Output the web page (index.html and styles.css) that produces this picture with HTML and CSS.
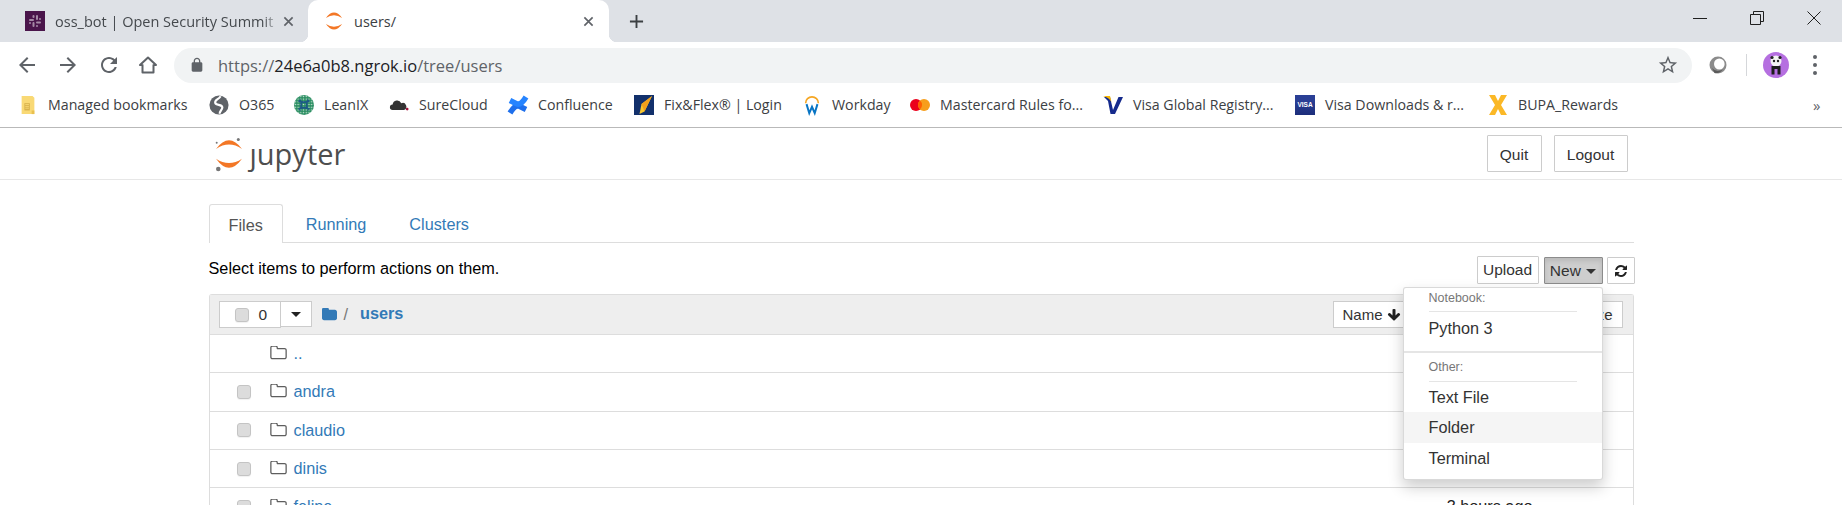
FILE: index.html
```html
<!DOCTYPE html>
<html lang="en">
<head>
<meta charset="utf-8">
<title>users/</title>
<link rel="stylesheet" href="styles.css">
</head>
<body>
<svg class="defs" width="0" height="0" aria-hidden="true">
  <symbol id="fa-folder-o" viewBox="0 0 1664 1408"><path transform="translate(0 -192)" d="M1536 1312v-704q0-40-28-68t-68-28h-704q-40 0-68-28t-28-68v-64q0-40-28-68t-68-28h-320q-40 0-68 28t-28 68v960q0 40 28 68t68 28h1216q40 0 68-28t28-68zm128-704v704q0 92-66 158t-158 66h-1216q-92 0-158-66t-66-158v-960q0-92 66-158t158-66h320q92 0 158 66t66 158v32h672q92 0 158 66t66 158z"/></symbol>
  <symbol id="jup-arcs" viewBox="0 0 28 32"><path d="M1 11Q14-6.400 27 11 14 2.200 1 11Z"/><path d="M1 20.700Q14 38.700 27 20.700 14 29.300 1 20.700Z"/></symbol>
  <pattern id="leanix-dots" width="3" height="3" patternUnits="userSpaceOnUse"><rect width="3" height="3" fill="#2c8f63"/><circle cx="1.500" cy="1.500" r=".8" fill="#cfe8da"/></pattern>
</svg>

<header class="chrome">
  <div class="tabstrip">
    <div class="tab">
      <svg class="favicon" viewBox="0 0 20 20"><rect width="20" height="20" fill="#4a154b"/><g fill="#a58aa6"><rect x="4" y="8" width="5" height="2" rx="1"/><rect x="11" y="4" width="2" height="5" rx="1"/><rect x="11" y="10.500" width="5" height="2" rx="1"/><rect x="7.500" y="11" width="2" height="5" rx="1"/><rect x="7.500" y="4" width="2" height="3" rx="1"/><rect x="14" y="7" width="2" height="2" rx="1"/><rect x="4" y="11" width="2" height="2" rx="1"/><rect x="11" y="14" width="2" height="2" rx="1"/></g></svg>
      <span class="tab-title tab-title-faded">oss_bot | Open Security Summit Slack</span>
      <svg class="tab-close" viewBox="0 0 12 12"><path d="M1.500 1.500l9 9M10.500 1.500l-9 9"/></svg>
    </div>
    <div class="tab tab-active">
      <svg class="favicon favicon-jup" viewBox="0 0 28 32"><use href="#jup-arcs"/></svg>
      <span class="tab-title">users/</span>
      <svg class="tab-close" viewBox="0 0 12 12"><path d="M1.500 1.500l9 9M10.500 1.500l-9 9"/></svg>
    </div>
    <svg class="tab-new" viewBox="0 0 16 16"><path d="M8 1v14M1 8h14"/></svg>
    <div class="window-controls">
      <svg viewBox="0 0 14 14"><path d="M0 7.500h14"/></svg>
      <svg viewBox="0 0 14 14"><path d="M.5 3.500h10v10H.5zM3.500 3.500V.5h10v10h-3"/></svg>
      <svg viewBox="0 0 14 14"><path d="M.5.5l13 13M13.500.5l-13 13"/></svg>
    </div>
  </div>

  <div class="toolbar">
    <svg class="nav-icon" viewBox="0 0 24 24"><path d="M20 11H7.830l5.590-5.590L12 4l-8 8 8 8 1.410-1.410L7.830 13H20v-2z"/></svg>
    <svg class="nav-icon" viewBox="0 0 24 24"><path d="M12 4l-1.410 1.410L16.170 11H4v2h12.170l-5.580 5.590L12 20l8-8z"/></svg>
    <svg class="nav-icon" viewBox="0 0 24 24"><path d="M17.650 6.350C16.200 4.900 14.210 4 12 4c-4.420 0-7.990 3.580-7.990 8s3.570 8 7.990 8c3.730 0 6.840-2.550 7.730-6h-2.080c-.82 2.330-3.040 4-5.650 4-3.310 0-6-2.690-6-6s2.690-6 6-6c1.660 0 3.140.69 4.220 1.780L13 11h7V4l-2.350 2.350z"/></svg>
    <svg class="nav-icon nav-home" viewBox="0 0 24 24"><path d="M12 4.500L4 12h2.500v7.500h11V12H20z"/></svg>
    <div class="omnibox">
      <svg class="lock" viewBox="0 0 24 24"><path d="M18 8h-1V6c0-2.760-2.240-5-5-5S7 3.240 7 6v2H6c-1.100 0-2 .9-2 2v10c0 1.100.9 2 2 2h12c1.100 0 2-.9 2-2V10c0-1.100-.9-2-2-2zM9 6c0-1.660 1.340-3 3-3s3 1.340 3 3v2H9V6z"/></svg>
      <span class="url"><span class="url-dim">https://</span>24e6a0b8.ngrok.io<span class="url-dim">/tree/users</span></span>
      <svg class="star" viewBox="0 0 24 24"><path d="M22 9.240l-7.190-.62L12 2 9.190 8.630 2 9.240l5.460 4.730L5.820 21 12 17.270 18.180 21l-1.630-7.030L22 9.240zM12 15.400l-3.760 2.270 1-4.280-3.320-2.880 4.380-.38L12 6.100l1.710 4.040 4.380.38-3.320 2.880 1 4.280L12 15.400z"/></svg>
    </div>
    <div class="toolbar-right">
      <svg class="ext" viewBox="0 0 20 20"><circle cx="10" cy="10" r="8.500" fill="#8b8b8b"/><ellipse cx="11.300" cy="9" rx="5.300" ry="5.500" fill="#fff"/><path d="M4 13q4 5 11 1.500-5 5-8.500 3.500z" fill="#5a5a5a"/></svg>
      <span class="toolbar-sep"></span>
      <svg class="avatar" viewBox="0 0 26 26"><circle cx="13" cy="13" r="13" fill="#b56fe0"/><circle cx="13" cy="9" r="5.500" fill="#f4f4f4"/><circle cx="9" cy="5.500" r="1.600" fill="#222"/><circle cx="17" cy="5.500" r="1.600" fill="#222"/><circle cx="11" cy="9" r="1.200" fill="#222"/><circle cx="15" cy="9" r="1.200" fill="#222"/><path d="M8.500 14h9v8.500h-3V17h-3v5.500h-3z" fill="#1d1d1d"/></svg>
      <svg class="menu-dots" viewBox="0 0 6 22"><circle cx="3" cy="3" r="2"/><circle cx="3" cy="11" r="2"/><circle cx="3" cy="19" r="2"/></svg>
    </div>
  </div>

  <nav class="bookmarks">
    <a class="bm"><svg class="bm-icon" viewBox="0 0 20 22"><path d="M3 1h12l2 2v18H3z" fill="#f9d975"/><path d="M6 9h6v8H6z" fill="#d8b24d"/><path d="M7 10.500h4M7 12.500h4M7 14.500h4" stroke="#f9d975"/><path d="M14 17h3v4h-3z" fill="#e9c04f"/></svg><span>Managed bookmarks</span></a>
    <a class="bm"><svg class="bm-icon" viewBox="0 0 24 24"><circle cx="12" cy="12" r="11.500" fill="#5f6368"/><path d="M14 1.500C11 6 6.500 5.500 7.500 9.500 8.500 13 16 10.500 16 15c0 3-3.500 4-3 7.500" fill="none" stroke="#fff" stroke-width="2.600"/></svg><span>O365</span></a>
    <a class="bm"><svg class="bm-icon" viewBox="0 0 22 22"><circle cx="11" cy="11" r="11" fill="url(#leanix-dots)"/><path d="M5 6.500q6 3 12 0M5 15.500q6-3 12 0M6.500 5q3 6 0 12M15.500 5q-3 6 0 12" fill="none" stroke="#1d5a86" stroke-width="2"/></svg><span>LeanIX</span></a>
    <a class="bm"><svg class="bm-icon" viewBox="0 0 22 22"><path d="M4 16.500a3 3 0 0 1 0-6 5 5 0 0 1 9.500-1.500A3.800 3.800 0 0 1 16.500 16.500z" fill="#333"/><circle cx="20" cy="15.500" r="1.500" fill="#a3123a"/></svg><span>SureCloud</span></a>
    <a class="bm"><svg class="bm-icon" viewBox="0 0 20 20"><path d="M2 18C5.500 12 8.500 10 11.500 11.200L18 14.500" fill="none" stroke="#1e6fec" stroke-width="5.500"/><path d="M18 2C14.500 8 11.500 10 8.500 8.800L2 5.500" fill="none" stroke="#2684ff" stroke-width="5.500"/></svg><span>Confluence</span></a>
    <a class="bm"><svg class="bm-icon" viewBox="0 0 20 20"><rect width="20" height="20" fill="#12306b"/><path d="M18 1L7.500 9 5.500 19l5-2.500z" fill="#f7c62f"/><path d="M18 1L7.500 9l3 7.500z" fill="#f19f1c"/></svg><span>Fix&amp;Flex® | Login</span></a>
    <a class="bm"><svg class="bm-icon" viewBox="0 0 20 22"><path d="M3 9a7 7 0 0 1 14 0" fill="none" stroke="#f5a623" stroke-width="1.800"/><path d="M4 10l3 10 3-7 3 7 3-10" fill="none" stroke="#0875c4" stroke-width="2.200"/></svg><span>Workday</span></a>
    <a class="bm"><svg class="bm-icon" viewBox="0 0 20 14"><circle cx="6" cy="7" r="6" fill="#eb001b"/><circle cx="14" cy="7" r="6" fill="#f79e1b"/><path d="M10 2.500a6 6 0 0 1 0 9 6 6 0 0 1 0-9z" fill="#ff5f00"/></svg><span>Mastercard Rules fo...</span></a>
    <a class="bm"><svg class="bm-icon" viewBox="0 0 20 20"><path d="M1 2h6l3 13L15.500 2H20l-8 17H7.500L5 6z" fill="#152a8c"/><path d="M0 1h7l1.500 6C7 4 4 2 0 1z" fill="#f7b600"/></svg><span>Visa Global Registry...</span></a>
    <a class="bm"><span class="visa-badge">VISA</span><span>Visa Downloads &amp; r...</span></a>
    <a class="bm"><svg class="bm-icon" viewBox="0 0 20 20"><path d="M1 0h6l3 6 3-6h6l-6 10 6 10h-6l-3-6-3 6H1l6-10z" fill="#fbb826"/></svg><span>BUPA_Rewards</span></a>
    <a class="bm-more">»</a>
  </nav>
</header>

<div class="site-header">
  <div class="site-header-inner">
    <a class="logo">
      <svg class="logo-mark" viewBox="0 0 28 34"><use href="#jup-arcs" width="28" height="32"/><circle cx="23.300" cy="1.500" r="1.500" fill="#767677"/><circle cx="1.700" cy="4.700" r="1" fill="#767677"/><circle cx="3.300" cy="31" r="2.300" fill="#767677"/></svg>
      <span class="logo-word">ȷupyter</span>
    </a>
    <div class="header-buttons">
      <button class="btn btn-header btn-quit">Quit</button>
      <button class="btn btn-header btn-logout">Logout</button>
    </div>
  </div>
</div>

<main class="container">
  <ul class="tabs">
    <li class="tabs-item tabs-item-active">Files</li>
    <li class="tabs-item">Running</li>
    <li class="tabs-item">Clusters</li>
  </ul>

  <div class="actions">
    <span class="hint">Select items to perform actions on them.</span>
    <div class="action-buttons">
      <button class="btn btn-upload">Upload</button>
      <div class="new-wrap">
        <button class="btn btn-new">New <span class="caret"></span></button>
        <div class="menu">
          <div class="menu-heading">Notebook:</div>
          <div class="menu-item menu-item-first">Python 3</div>
          <div class="menu-divider"></div>
          <div class="menu-heading menu-heading-second">Other:</div>
          <div class="menu-item menu-item-short">Text File</div>
          <div class="menu-item menu-item-hover">Folder</div>
          <div class="menu-item">Terminal</div>
        </div>
      </div>
      <button class="btn btn-refresh" aria-label="Refresh"><svg viewBox="0 0 1792 1792"><path d="M1639 1056q0 5-1 7-64 268-268 434.500t-478 166.500q-146 0-282.500-55t-243.500-157l-129 129q-19 19-45 19t-45-19-19-45v-448q0-26 19-45t45-19h448q26 0 45 19t19 45-19 45l-137 137q71 66 161 102t187 36q134 0 250-65t186-179q11-17 53-117 8-23 30-23h192q13 0 22.500 9.500t9.500 22.500zm25-800v448q0 26-19 45t-45 19h-448q-26 0-45-19t-19-45 19-45l138-138q-148-137-349-137-134 0-250 65t-186 179q-11 17-53 117-8 23-30 23h-199q-13 0-22.500-9.500t-9.500-22.500v-7q65-268 270-434.500t480-166.500q146 0 284 55.500t245 156.500l130-129q19-19 45-19t45 19 19 45z"/></svg></button>
    </div>
  </div>

  <section class="list">
    <div class="list-head">
      <div class="select-group">
        <span class="select-count"><span class="check"></span><span>0</span></span>
        <span class="select-caret"><span class="caret caret-dark"></span></span>
      </div>
      <svg class="crumb-folder" viewBox="0 0 1664 1408"><path transform="translate(0 -192)" d="M1664 600v704q0 92-66 158t-158 66h-1216q-92 0-158-66t-66-158v-960q0-92 66-158t158-66h320q92 0 158 66t66 158v32h672q92 0 158 66t66 158z"/></svg>
      <span class="crumb-sep">/</span>
      <a class="crumb-link">users</a>
      <div class="sort-group">
        <button class="sort-btn sort-name">Name <svg class="sort-arrow" viewBox="0 0 1792 1792"><path d="M1675 832q0 53-37 90l-651 652q-39 37-91 37-53 0-90-37l-651-652q-38-36-38-90 0-53 38-91l74-75q39-37 91-37 53 0 90 37l294 294v-704q0-52 38-90t90-38h128q52 0 90 38t38 90v704l294-294q37-37 90-37 52 0 91 37l75 75q37 39 37 91z"/></svg></button>
        <button class="sort-btn sort-modified">Last Modified</button>
        <button class="sort-btn sort-size">File size</button>
      </div>
    </div>
    <div class="row">
      <span class="check check-none"></span>
      <svg class="row-folder"><use href="#fa-folder-o"/></svg>
      <a class="row-name">..</a>
    </div>
    <div class="row">
      <span class="check"></span>
      <svg class="row-folder"><use href="#fa-folder-o"/></svg>
      <a class="row-name">andra</a>
    </div>
    <div class="row">
      <span class="check"></span>
      <svg class="row-folder"><use href="#fa-folder-o"/></svg>
      <a class="row-name">claudio</a>
    </div>
    <div class="row">
      <span class="check"></span>
      <svg class="row-folder"><use href="#fa-folder-o"/></svg>
      <a class="row-name">dinis</a>
    </div>
    <div class="row">
      <span class="check"></span>
      <svg class="row-folder"><use href="#fa-folder-o"/></svg>
      <a class="row-name">feline</a>
      <span class="row-time">3 hours ago</span>
    </div>
  </section>
</main>
</body>
</html>
```

FILE: styles.css
```css
* { box-sizing: border-box; }

html, body {
  margin: 0;
  height: 505px;
  overflow: hidden;
  background: #fff;
}

body {
  font-family: "Liberation Sans", Arial, sans-serif;
  font-size: 16.25px;
  color: #000;
}

.defs { display: block; height: 0; }

/* Browser chrome */
.chrome { font-family: "Open Sans", "Noto Sans", sans-serif; color: #3c4043; }

.tabstrip {
  display: flex;
  align-items: stretch;
  height: 42px;
  background: #dee1e6;
}

.tab {
  position: relative;
  display: flex;
  align-items: center;
  width: 301px;
  padding: 0 12px 0 25px;
  font-size: 14.5px;
  color: #45494d;
}

.tab-active {
  padding-left: 16px;
  background: #fff;
  border-radius: 10px 10px 0 0;
  color: #3c4043;
}

.tab-active::before,
.tab-active::after {
  content: "";
  position: absolute;
  bottom: 0;
  width: 8px;
  height: 8px;
}

.tab-active::before {
  left: -8px;
  background: radial-gradient(circle at 0 0, #dee1e6 8px, #fff 8.5px);
}

.tab-active::after {
  right: -8px;
  background: radial-gradient(circle at 100% 0, #dee1e6 8px, #fff 8.5px);
}

.tab:first-child { width: 308px; }

.favicon { width: 20px; height: 20px; flex: none; }
.favicon-jup { fill: #f37726; }

.tab-title {
  flex: 1;
  margin-left: 10px;
  overflow: hidden;
  white-space: nowrap;
}

.tab-title-faded {
  -webkit-mask-image: linear-gradient(90deg, #000 208px, transparent 224px);
  mask-image: linear-gradient(90deg, #000 208px, transparent 224px);
}

.tab-close {
  flex: none;
  width: 11px;
  height: 11px;
  margin: 0 3px 0 8px;
  fill: none;
  stroke: #5f6368;
  stroke-width: 1.800;
}

.tab:first-child .tab-close { margin-right: 2px; }

.tab-new {
  align-self: center;
  width: 15px;
  height: 15px;
  margin-left: 20px;
  fill: none;
  stroke: #3c4043;
  stroke-width: 2;
}

.window-controls {
  display: flex;
  gap: 43px;
  align-items: center;
  margin-left: auto;
  padding: 0 21px 6px 0;
}

.window-controls svg {
  width: 14px;
  height: 14px;
  fill: none;
  stroke: #1f1f1f;
  stroke-width: 1;
}

.toolbar {
  display: flex;
  align-items: center;
  height: 43px;
  padding: 3px 0 0 15px;
  background: #fff;
}

.nav-icon {
  flex: none;
  width: 24px;
  height: 24px;
  margin-right: 17px;
  fill: #5f6368;
}

.nav-home {
  margin-left: -2px;
  fill: none;
  stroke: #5f6368;
  stroke-width: 2;
  stroke-linejoin: round;
}

.omnibox {
  display: flex;
  align-items: center;
  width: 1518px;
  height: 35px;
  margin-left: -3px;
  padding: 0 13px 0 15px;
  background: #f1f3f4;
  border-radius: 18px;
}

.lock { flex: none; width: 16px; height: 16px; fill: #5f6368; }

.url {
  margin-left: 13px;
  font-size: 16.5px;
  color: #202124;
  white-space: nowrap;
}

.url-dim { color: #5f6368; }

.star { flex: none; width: 22px; height: 22px; margin-left: auto; fill: #5f6368; }

.toolbar-right { display: flex; align-items: center; margin-left: 16px; }

.ext { width: 20px; height: 20px; }

.toolbar-sep { width: 1px; height: 22px; margin: 0 16px 0 18px; background: #d5d7da; }

.avatar { width: 26px; height: 26px; }

.menu-dots { width: 6px; height: 22px; margin-left: 23px; fill: #5f6368; }

.bookmarks {
  display: grid;
  grid-template-columns: 191px 85px 95px 119px 126px 168px 108px 193px 192px 193px 325px 20px;
  align-items: center;
  height: 43px;
  padding: 0 0 3px 18px;
  background: #fff;
  border-bottom: 1px solid #b9b9b9;
  font-size: 14.2px;
}

.bm { display: flex; align-items: center; gap: 10px; white-space: nowrap; }

.bm-icon { flex: none; width: 20px; height: 20px; overflow: visible; }

.bm-more { font-size: 15px; color: #5f6368; }

.visa-badge {
  flex: none;
  display: flex;
  align-items: center;
  justify-content: center;
  width: 20px;
  height: 20px;
  background: linear-gradient(#2a3f95 0 30%, #1c2d7a);
  color: #fff;
  font: bold 6.500px "Liberation Sans", sans-serif;
}

/* Jupyter header */
.site-header { height: 52px; border-bottom: 1px solid #e7e7e7; }

.site-header-inner {
  display: flex;
  justify-content: space-between;
  width: 1425px;
  height: 100%;
  margin: 0 auto;
  padding: 7px 6px 0;
}

.logo { display: flex; align-items: flex-start; }

.logo-mark { width: 28px; height: 34px; margin-top: 3px; fill: #f37726; }

.logo-word {
  margin: -4px 0 0 7px;
  font: 400 29px/46px "Open Sans", sans-serif;
  color: #4e4e4e;
}

.header-buttons { display: flex; gap: 12px; }

.btn {
  padding: 0;
  background: #fff;
  border: 1px solid #ccc;
  border-radius: 1px;
  font: inherit;
  font-size: 15.5px;
  color: #333;
}

.btn-header { height: 37px; padding-top: 2px; }
.btn-quit { width: 55px; }
.btn-logout { width: 74px; }

/* Main */
.container { position: relative; width: 1425px; margin: 0 auto; }

.tabs {
  display: flex;
  gap: 3px;
  height: 39px;
  margin: 24px 0 0;
  padding: 0;
  border-bottom: 1px solid #ddd;
  list-style: none;
}

.tabs-item {
  height: 38px;
  padding: 0 20px;
  line-height: 41px;
  color: #337ab7;
}

.tabs-item-active {
  height: 39px;
  background: #fff;
  border: 1px solid #ddd;
  border-bottom: 0;
  border-radius: 3px 3px 0 0;
  padding: 0 19px;
  color: #555;
}

.actions {
  display: flex;
  align-items: center;
  justify-content: space-between;
  height: 28px;
  margin: 13px 0 10px;
}

.hint { padding-bottom: 4px; line-height: 24px; }

.action-buttons { display: flex; align-items: flex-end; height: 28px; margin-right: -1px; }

.btn-upload { width: 62px; height: 28px; margin-right: 5px; }

.new-wrap { position: relative; margin-right: 4px; }

.btn-new {
  display: block;
  width: 59px;
  height: 27px;
  background: #cecece;
  border-color: #8c8c8c;
  box-shadow: inset 0 3px 5px rgba(0, 0, 0, .1);
}

.caret {
  display: inline-block;
  width: 0;
  height: 0;
  margin-left: 1px;
  vertical-align: middle;
  border-top: 5px solid #333;
  border-left: 5px solid transparent;
  border-right: 5px solid transparent;
}

.btn-refresh {
  display: flex;
  align-items: center;
  justify-content: center;
  width: 28px;
  height: 27px;
}

.btn-refresh svg { width: 14px; height: 14px; fill: #222; }

.menu {
  position: absolute;
  top: 30px;
  right: 0;
  z-index: 5;
  width: 200px;
  padding-bottom: 5px;
  background: #fff;
  border: 1px solid rgba(0, 0, 0, .15);
  border-radius: 3px;
  box-shadow: 0 7px 15px rgba(0, 0, 0, .2);
}

.menu-heading {
  height: 24px;
  margin: 0 25px;
  border-bottom: 1px solid #e5e5e5;
  font-size: 12.500px;
  line-height: 20px;
  color: #777;
}

.menu-heading-second { height: 29px; padding-top: 4px; }

.menu-item {
  height: 31px;
  padding-left: 25px;
  line-height: 30px;
  color: #333;
}

.menu-item-first { line-height: 32px; }

.menu-item-short { height: 30px; }

.menu-item-hover { background: #f5f5f5; }

.menu-divider { height: 2px; margin-top: 8px; background: #e5e5e5; }

/* List */
.list { border: 1px solid #ddd; border-bottom: 0; border-radius: 3px 3px 0 0; }

.list-head {
  display: flex;
  align-items: center;
  height: 40px;
  padding: 0 10px 0 9px;
  background: #eee;
  border-bottom: 1px solid #ddd;
}

.select-group { display: flex; align-items: flex-start; height: 27px; }

.select-count {
  display: flex;
  align-items: center;
  gap: 10px;
  width: 62px;
  height: 27px;
  padding-left: 15px;
  background: #fff;
  border: 1px solid #ccc;
  font-size: 15.500px;
  color: #333;
}

.select-caret {
  display: flex;
  align-items: center;
  justify-content: center;
  width: 32px;
  height: 26px;
  margin-left: -1px;
  background: #fff;
  border: 1px solid #ccc;
}

.caret-dark { margin: 0; border-top-color: #222; }

.crumb-folder { width: 15px; height: 13px; margin: -1px 0 0 10px; fill: #337ab7; }

.crumb-sep { margin: -1px 0 0 7px; color: #777; }

.crumb-link { margin: -2px 0 0 12px; font-weight: bold; color: #337ab7; }

.sort-group { display: flex; width: 290px; height: 27px; margin-left: auto; }

.sort-btn {
  padding: 0 9px;
  background: #fff;
  border: 1px solid #ccc;
  font: inherit;
  font-size: 15px;
  color: #333;
  white-space: nowrap;
}

.sort-modified { flex: 1; }

.sort-arrow { width: 14px; height: 14px; vertical-align: -2px; fill: #222; }

.row {
  display: flex;
  align-items: center;
  height: 38.330px;
  padding: 0 100px 0 27px;
  border-bottom: 1px solid #ddd;
}

.check {
  flex: none;
  width: 14px;
  height: 14px;
  background: #dcdcdc;
  border: 1px solid #c4c4c4;
  border-radius: 3px;
  box-shadow: 0 1px 1px rgba(0, 0, 0, .06);
}

.check-none { visibility: hidden; }

.row-folder { flex: none; width: 17px; height: 14px; margin: -1px 0 0 19px; fill: #5e5e5e; }

.row-name { margin-left: 7px; color: #337ab7; }

.row-time { margin-left: auto; color: #222; }
```
